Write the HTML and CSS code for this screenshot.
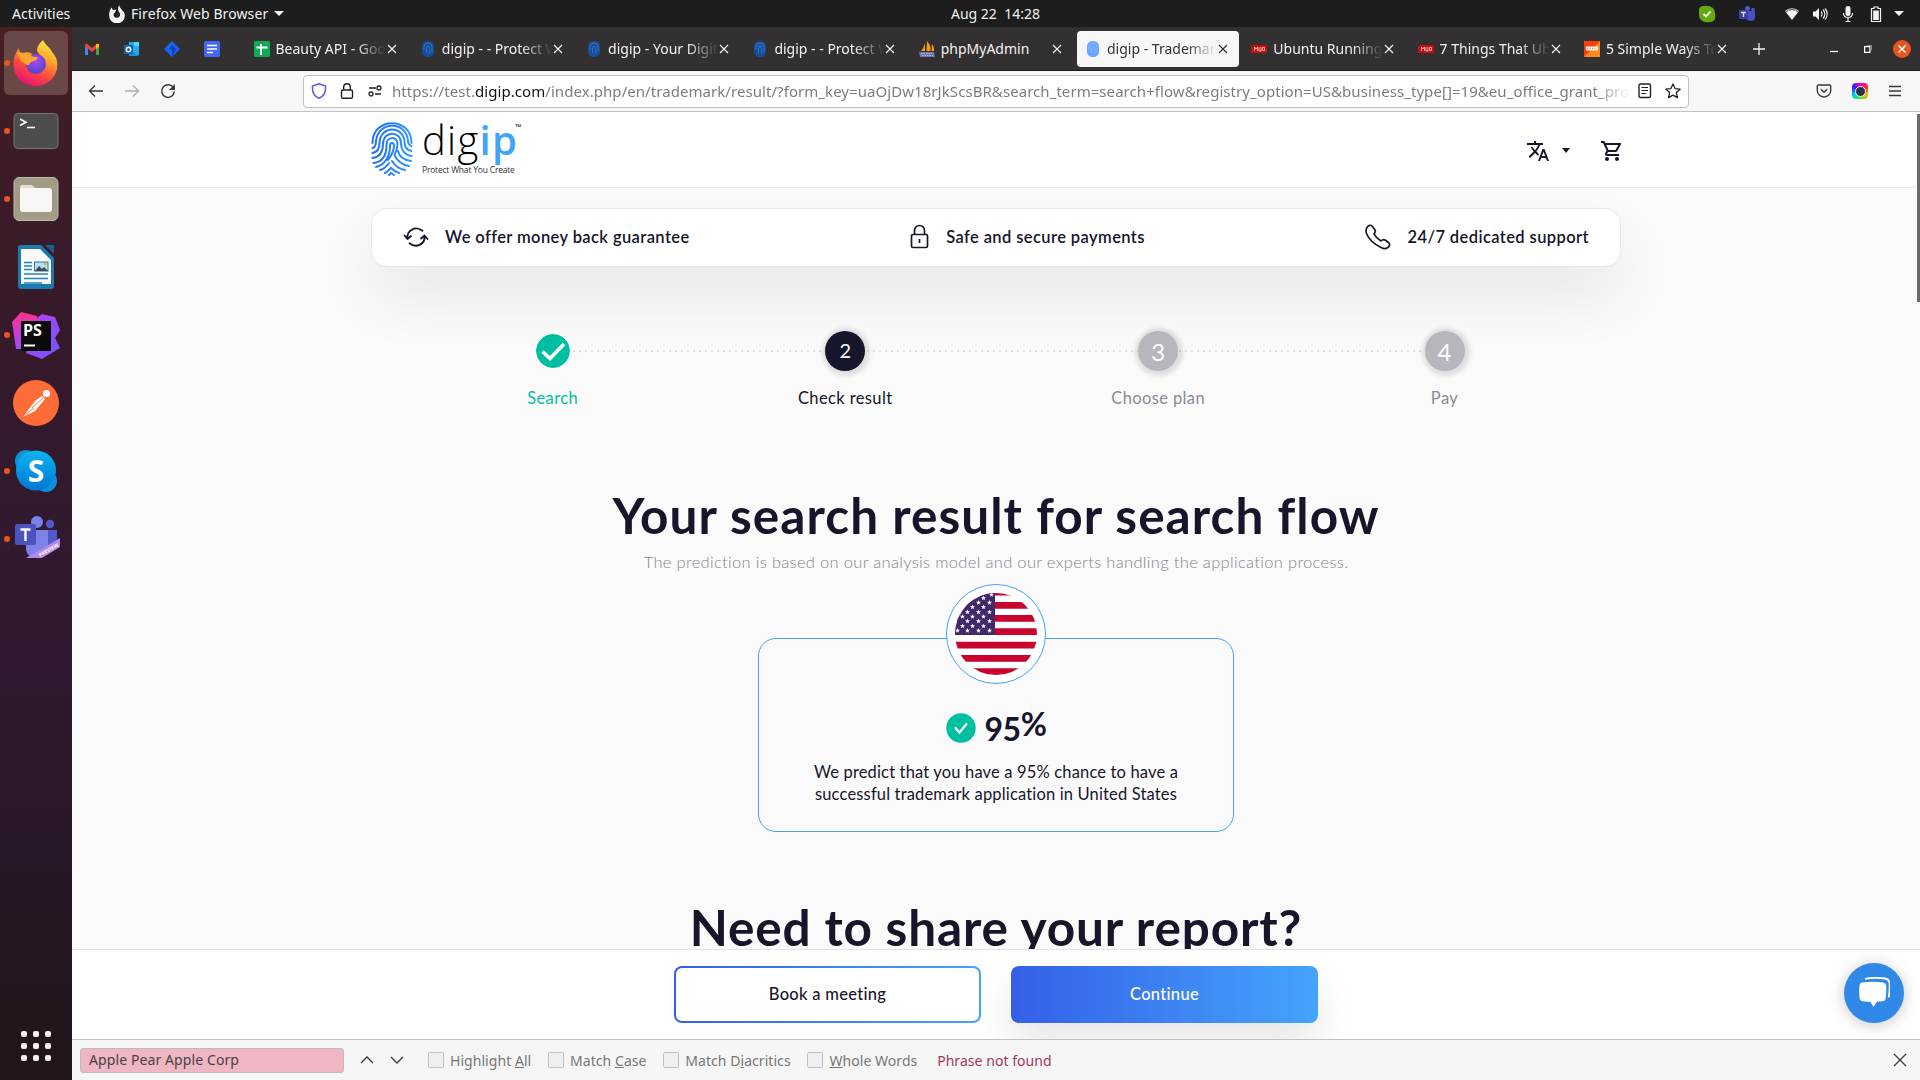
FILE: index.html
```html
<!DOCTYPE html>
<html lang="en">
<head>
<meta charset="utf-8">
<title>digip - Trademark result</title>
<link rel="stylesheet" href="styles.css">
</head>
<body>
<svg class="defs" width="0" height="0" aria-hidden="true">
  <defs>
    <linearGradient id="print-g" gradientUnits="userSpaceOnUse" x1="0" y1="0" x2="42" y2="0"><stop offset="0" stop-color="#1f6df0"/><stop offset="1" stop-color="#3399fa"/></linearGradient>
    <linearGradient id="ff-body" x1=".8" y1="0" x2=".3" y2="1"><stop offset="0" stop-color="#fff044"/><stop offset=".35" stop-color="#ffa42c"/><stop offset=".65" stop-color="#ff4b3a"/><stop offset="1" stop-color="#e3107a"/></linearGradient>
    <radialGradient id="ff-core" cx=".5" cy=".35" r=".7"><stop offset="0" stop-color="#a849f0"/><stop offset="1" stop-color="#4a45c9"/></radialGradient>
    <linearGradient id="ps-a" x1="0" y1="0" x2="0" y2="1"><stop offset="0" stop-color="#ff318c"/><stop offset="1" stop-color="#9a4bff"/></linearGradient>
    <linearGradient id="ps-b" x1="0" y1="0" x2="1" y2="1"><stop offset="0" stop-color="#c63cf2"/><stop offset="1" stop-color="#6b57ff"/></linearGradient>
    <linearGradient id="sk" x1="0" y1="0" x2="0" y2="1"><stop offset="0" stop-color="#0bb5ef"/><stop offset="1" stop-color="#0077d7"/></linearGradient>
    <symbol id="x" viewBox="0 0 12 12"><path d="M2 2l8 8M10 2l-8 8" fill="none" stroke="currentColor" stroke-width="1.2"/></symbol>
    <symbol id="fp" viewBox="0 0 16 16"><rect x="2" y="0" width="12" height="16" rx="5.5" fill="currentColor"/><path d="M4 9V6a4 4 0 0 1 8 0v5M6.500 12V7a1.600 1.600 0 0 1 3.200 0v6" fill="none" stroke="#fff" stroke-opacity=".2" stroke-width=".9"/></symbol>
    <symbol id="muo" viewBox="0 0 16 16"><path d="M2 4h14v7l-1 1H0V6z" fill="#c90d0d"/><path d="M3.500 10V6l1.500 2 1.500-2v4M8 6v4h2V6M11.500 6.500h2v3h-2z" fill="none" stroke="#fff" stroke-opacity=".8" stroke-width=".8"/></symbol>
    <symbol id="star" viewBox="0 0 10 10"><path d="M5 0l1.300 3.400L10 3.600 7.100 5.900 8.100 9.500 5 7.400 1.900 9.500 2.900 5.900 0 3.600l3.700-.2z" fill="#fff"/></symbol>
  </defs>
</svg>

<header class="topbar">
  <span class="activities">Activities</span>
  <svg class="app-mark" width="16" height="18" viewBox="0 0 16 18"><path d="M10.500 0c-.4 2 .8 2.600 1.900 4.200C15 7 16 8 15.800 11a7.700 7.300 0 0 1-15.600 0C0 7 1 4.500 2.500 2.500L4 5l3.500-.6L6 7.500c-1.800 1-2 4 .5 5 2.500.8 5-.8 4.500-3.500C10.700 7 9 6.500 9 4 9 2.500 9.500 1 10.500 0z" fill="#f2f2f2"/></svg>
  <span class="app-name">Firefox Web Browser</span>
  <i class="caret"></i>
  <span class="clock">Aug 22&nbsp; 14:28</span>
  <div class="tray">
    <svg width="18" height="18" viewBox="0 0 18 18"><path d="M1 6C1 2 3 1 6 1c6-1 11 2 11 7 1 5 0 9-5 9C5 18 1 15 1 9z" fill="#65a80f"/><path d="M5.500 9l2.500 2.500 4.500-5" fill="none" stroke="#fff" stroke-width="1.800"/></svg>
    <svg width="18" height="18" viewBox="0 0 18 18"><circle cx="9.500" cy="3.500" r="2.500" fill="#5059c9"/><circle cx="15" cy="4.500" r="1.800" fill="#5059c9"/><path d="M8 6h9v6c0 3-2 4-4 4s-5-1-5-4z" fill="#4a50bd"/><rect x="1" y="5" width="9" height="9" fill="#3940a5"/><path d="M3 7.500h5M5.500 7.500V12" stroke="#ddd" stroke-width="1.300"/></svg>
    <svg width="16" height="16" viewBox="0 0 16 16"><path d="M1 5a10 10 0 0 1 14 0L8 14z" fill="#f2f2f2"/><path d="M1.500 6.300a9 9 0 0 1 13 0" fill="none" stroke="#1d1d1d" stroke-width=".8"/></svg>
    <svg width="16" height="16" viewBox="0 0 16 16"><path d="M1 5.500h2.500L7 2v12l-3.500-3.500H1z" fill="#f2f2f2"/><path d="M9 5.500a3.500 3.500 0 0 1 0 5M11 3.500a6.500 6.500 0 0 1 0 9M13 2.500a8 8 0 0 1 0 11" fill="none" stroke="#f2f2f2" stroke-width="1.100"/></svg>
    <svg width="12" height="16" viewBox="0 0 12 16"><rect x="3.500" y="0" width="5" height="10" rx="2.500" fill="#f2f2f2"/><path d="M1.500 7c0 6 9 6 9 0M6 12v3.500M3.500 15.500h5" fill="none" stroke="#f2f2f2" stroke-width="1.200"/></svg>
    <svg width="12" height="16" viewBox="0 0 12 16"><path d="M4 1h4v1.500h2.500v13h-9v-13H4z" fill="none" stroke="#f2f2f2" stroke-width="1.200"/><rect x="3.200" y="4.500" width="5.600" height="9.500" fill="#f2f2f2"/></svg>
    <i class="caret"></i>
  </div>
</header>

<div class="desktop">
  <nav class="dock">
    <div class="app running focused"><svg width="48" height="48" viewBox="0 0 48 48"><path d="M31 1c2 5 7 7 9 12 5 5 6 11 5 17-2 9-10 17-21 17C11 47 2 38 1.500 26 1 19 4 13 7 9c0 3 1 5 3 6 3-2 6-2 9-1 1 2 2 3 5 3l5 1-4-6c0-5 3-8 6-11z" fill="url(#ff-body)"/><circle cx="24" cy="25" r="10" fill="url(#ff-core)"/><path d="M5 14c5-1 10 0 13 2 2 2 5 2 8 2-1 4-6 4-8 6-1 5-5 0-9-2z" fill="#ffa52d"/></svg></div>
    <div class="app running"><svg width="48" height="48" viewBox="0 0 48 48"><rect x="2" y="6.500" width="44" height="35" rx="4" fill="#4d4d4d" stroke="#777" stroke-width="1"/><path d="M8 12l6 3.200-6 3.200" fill="none" stroke="#fff" stroke-width="1.700"/><path d="M15 20.500h8" stroke="#fff" stroke-width="1.600"/></svg></div>
    <div class="app running"><svg width="48" height="48" viewBox="0 0 48 48"><rect x="2" y="2.500" width="44" height="43" rx="5" fill="#a29b86" stroke="#bdb8a8"/><path d="M8 12q0-2 2-2h10l4 4v4H8z" fill="#e3dfd3"/><rect x="8" y="13" width="32" height="24" rx="3" fill="#f8f7f5"/></svg></div>
    <div class="app"><svg width="48" height="48" viewBox="0 0 48 48"><path d="M9 2h20l13 13v28q0 3-3 3H9q-3 0-3-3V5q0-3 3-3z" fill="#1d7ab0"/><path d="M33 2h9v9z" fill="#17618c"/><path d="M9 6h19l11 11v24H9z" fill="#fafafa"/><g stroke="#2184b8" stroke-width="1.600"><path d="M12 19.500h8M12 23h8M12 26.500h8M12 31h24M12 35.500h24M12 40h18"/></g><rect x="22.500" y="19" width="13.500" height="9" fill="#b6ddf2" stroke="#1d7ab0"/><path d="M23 28l4-5 3 3 2-2 4 4z" fill="#444"/><circle cx="33.500" cy="21" r="1.300" fill="#f5a800"/></svg></div>
    <div class="app running"><svg width="48" height="48" viewBox="0 0 48 48"><path d="M0 11L9 1l16 4v20L13 38H4z" fill="url(#ps-a)"/><path d="M25 7l5-4 13 3 5 13-5 8 5 10-18 11-16-6z" fill="url(#ps-b)"/><rect x="9" y="10" width="30" height="30" fill="#0b0b0b"/><text x="11" y="25" class="ps">PS</text><path d="M12 34.500h11" stroke="#fff" stroke-width="2"/></svg></div>
    <div class="app"><svg width="48" height="48" viewBox="0 0 48 48"><circle cx="24" cy="24" r="23" fill="#ff6c37"/><circle cx="34.500" cy="14.500" r="3.600" fill="#fff"/><path d="M30 17l3 3-10 12-6 3-6 3 6-8 6-8z" fill="#fff"/><path d="M20 29l11-10M13 36l9-7" stroke="#ff6c37" stroke-width=".9"/></svg></div>
    <div class="app running"><svg width="48" height="48" viewBox="0 0 48 48"><circle cx="14" cy="14" r="11" fill="#0a93d8"/><circle cx="34" cy="34" r="11" fill="#0a8fdc"/><circle cx="24" cy="23.500" r="20" fill="url(#sk)"/><text x="24" y="35" text-anchor="middle" class="skype">S</text></svg></div>
    <div class="app running"><svg width="48" height="48" viewBox="0 0 48 48"><circle cx="25" cy="7" r="6" fill="#7b83eb"/><circle cx="38" cy="9" r="4.200" fill="#5059c9"/><path d="M32 15h13v12c0 7-5 10-11 9z" fill="#5059c9"/><path d="M14 15h22v17c0 8-7 12-12 11-6 0-10-4-10-10z" fill="#7b83eb"/><rect x="3" y="9" width="21" height="21" rx="2" fill="#4b53bc"/><path d="M8.500 14.500h10M13.500 14.500V26" stroke="#fff" stroke-width="2.400"/><path d="M14 43L48 23v9L30 43z" fill="#b289e6"/><text x="28" y="42" transform="rotate(-30 28 42)" class="preview">PREVIEW</text></svg></div>
    <div class="apps-grid"><i></i><i></i><i></i><i></i><i></i><i></i><i></i><i></i><i></i></div>
  </nav>

  <section class="window">
    <div class="tabs">
      <div class="pin"><svg width="16" height="16" viewBox="0 0 16 16"><path d="M2.500 14V4" stroke="#4285f4" stroke-width="3"/><path d="M13.500 14V4" stroke="#34a853" stroke-width="3"/><path d="M1.500 3.500L8 9l6.500-5.500" fill="none" stroke="#ea4335" stroke-width="3"/><path d="M12 3h3v3l-3 2z" fill="#fbbc04"/></svg></div>
      <div class="pin"><svg width="16" height="16" viewBox="0 0 16 16"><path d="M5 1h10v13H5z" fill="#28a8ea"/><path d="M10 1h5v4h-5z" fill="#50d9ff"/><path d="M5 9l10 6H5z" fill="#1490df"/><rect y="4" width="9" height="9" fill="#0f65b5"/><circle cx="4.500" cy="8.500" r="2.200" fill="none" stroke="#fff" stroke-width="1.400"/></svg></div>
      <div class="pin"><svg width="16" height="16" viewBox="0 0 16 16"><path d="M8 0l8 8-8 8-8-8z" fill="#1d63f2"/><path d="M8 4l4 4-4 8V9L5 8z" fill="#0f3fc4"/></svg></div>
      <div class="pin"><svg width="16" height="16" viewBox="0 0 16 16"><rect width="16" height="16" rx="1.500" fill="#4269f0"/><path d="M3 4.500h10M3 8h10M3 11.500h6" stroke="#fff" stroke-width="1.700"/></svg></div>
      <div class="tab first"><svg width="16" height="16" viewBox="0 0 16 16"><rect width="16" height="16" rx="1.500" fill="#0fa958"/><path d="M7 3v11M2.500 6.500h11" stroke="#fff" stroke-width="2"/></svg><span class="label">Beauty API - Goo</span><svg class="close"><use href="#x"/></svg></div>
      <div class="tab"><svg class="fav navy"><use href="#fp"/></svg><span class="label">digip - - Protect W</span><svg class="close"><use href="#x"/></svg></div>
      <div class="tab"><svg class="fav navy"><use href="#fp"/></svg><span class="label">digip - Your Digit</span><svg class="close"><use href="#x"/></svg></div>
      <div class="tab"><svg class="fav navy"><use href="#fp"/></svg><span class="label">digip - - Protect W</span><svg class="close"><use href="#x"/></svg></div>
      <div class="tab"><svg width="16" height="16" viewBox="0 0 16 16"><path d="M6 2v8H2c2-2 3-5 4-8zM8 0c3 3 4 7 3.500 10H7.500zM13 3c2 2 2 5 2 7h-2.500z" fill="#f89c0e"/><path d="M0 11h15l1 5H1z" fill="#6c78af"/><path d="M2 12.500h11M3 14.500h11" stroke="#ccd" stroke-width=".8" stroke-dasharray="1.500 1"/></svg><span class="label whole">phpMyAdmin</span><svg class="close"><use href="#x"/></svg></div>
      <div class="tab active"><svg class="fav sky"><use href="#fp"/></svg><span class="label">digip - Trademark</span><svg class="close"><use href="#x"/></svg></div>
      <div class="tab"><svg class="fav"><use href="#muo"/></svg><span class="label">Ubuntu Running</span><svg class="close"><use href="#x"/></svg></div>
      <div class="tab"><svg class="fav"><use href="#muo"/></svg><span class="label">7 Things That Ub</span><svg class="close"><use href="#x"/></svg></div>
      <div class="tab"><svg width="16" height="16" viewBox="0 0 16 16"><rect width="16" height="16" fill="#fb3d0c"/><path d="M0 16L16 0v16z" fill="#ff8a16"/><path d="M2 5.500h12v4H2z" fill="#fff"/><path d="M3 7.500h10" stroke="#fb6a30" stroke-width="1.300" stroke-dasharray="1 1.500"/></svg><span class="label">5 Simple Ways To</span><svg class="close"><use href="#x"/></svg></div>
      <svg class="plus" width="12" height="12" viewBox="0 0 12 12"><path d="M6 0v12M0 6h12" stroke="#f5f5f5" stroke-width="1.300"/></svg>
      <div class="wm">
        <svg width="8" height="8" viewBox="0 0 8 8"><path d="M0 6.500h8" stroke="#fff" stroke-width="1.200"/></svg>
        <svg width="8" height="8" viewBox="0 0 8 8"><path d="M.6 1.600h5.300v5.700H.6z" fill="none" stroke="#fff" stroke-width="1.200"/><path d="M2.500.4H7.600v5" fill="none" stroke="#bbb" stroke-width=".7"/></svg>
        <svg width="18" height="18" viewBox="0 0 18 18"><circle cx="9" cy="9" r="9" fill="#e95420"/><path d="M5.500 5.500l7 7M12.500 5.500l-7 7" stroke="#fff" stroke-width="1.500"/></svg>
      </div>
    </div>

    <div class="toolbar">
      <div class="nav-buttons">
        <svg width="16" height="16" viewBox="0 0 16 16"><path d="M15 8H1.500M7 2.500L1.500 8 7 13.500" fill="none" stroke="#3a3a3a" stroke-width="1.400"/></svg>
        <svg width="16" height="16" viewBox="0 0 16 16"><path d="M1 8h13.500M9 2.500L14.500 8 9 13.500" fill="none" stroke="#b0b0b0" stroke-width="1.400"/></svg>
        <svg width="16" height="16" viewBox="0 0 16 16"><path d="M13.500 5A6.300 6.300 0 1 0 14.300 8.500" fill="none" stroke="#3a3a3a" stroke-width="1.500"/><path d="M15 1v6H9z" fill="#3a3a3a"/></svg>
      </div>
      <div class="urlbar">
        <svg width="16" height="16" viewBox="0 0 16 16"><path d="M8 .8L14.500 3C15 9 12.500 13.500 8 15.300 3.500 13.500 1 9 1.500 3z" fill="none" stroke="#6354d8" stroke-width="1.500"/></svg>
        <svg width="16" height="16" viewBox="0 0 16 16"><rect x="2.500" y="7" width="11" height="8.300" rx="1.200" fill="none" stroke="#222" stroke-width="1.400"/><path d="M4.700 7V4a3.300 3.300 0 0 1 6.600 0v3" fill="none" stroke="#222" stroke-width="1.400"/></svg>
        <svg width="16" height="16" viewBox="0 0 16 16"><path d="M2 5h7M8 11h6" stroke="#222" stroke-width="1.400"/><circle cx="12" cy="5" r="2" fill="none" stroke="#222" stroke-width="1.300"/><circle cx="4" cy="11" r="2" fill="none" stroke="#222" stroke-width="1.300"/></svg>
        <span class="url">https://test.<b>digip.com</b>/index.php/en/trademark/result/?form_key=uaOjDw18rJkScsBR&amp;search_term=search+flow&amp;registry_option=US&amp;business_type[]=19&amp;eu_office_grant_pro</span>
        <svg width="14" height="16" viewBox="0 0 14 16"><rect x="1" y="1" width="11.500" height="13.500" rx="1.500" fill="none" stroke="#222" stroke-width="1.400"/><path d="M3.500 4.500H10M3.500 7.500H10M3.500 10.500H8" stroke="#222" stroke-width="1.100"/></svg>
        <svg width="16" height="16" viewBox="0 0 16 16"><path d="M8 1l2.100 4.600 5 .6-3.700 3.400 1 5L8 12.100l-4.400 2.500 1-5L.9 6.200l5-.6z" fill="none" stroke="#222" stroke-width="1.300" stroke-linejoin="round"/></svg>
      </div>
      <div class="extras">
        <svg width="16" height="16" viewBox="0 0 16 16"><path d="M2.300 2h11.400q1 0 1 1v4.500a6.700 6.500 0 0 1-13.400 0V3q0-1 1-1z" fill="none" stroke="#3a3a3a" stroke-width="1.400"/><path d="M4.800 6.200L8 9.200l3.200-3" fill="none" stroke="#3a3a3a" stroke-width="1.500"/></svg>
        <span class="spectrum"><i></i></span>
        <svg width="14" height="12" viewBox="0 0 14 12"><path d="M1 1.500h12M1 6h12M1 10.500h12" stroke="#3a3a3a" stroke-width="1.300"/></svg>
      </div>
    </div>

    <main class="page">
      <header class="site-header">
        <div class="logo">
          <svg width="42" height="54" viewBox="0 0 42 54" fill="none" stroke="url(#print-g)" stroke-width="2" stroke-linecap="round">
            <path d="M1.500 21C1.500-5.500 40.500-5.500 40.500 21"/>
            <path d="M1.500 26c4-1 3-4 3.500-7C7-1.500 36-1 37 19c0 3 1 4 3.500 5"/>
            <path d="M1.500 31c6-1 7-5 7-10C9 3 33 3.500 33.500 20c0 5 2 8 7 9"/>
            <path d="M1.500 36c8-1 10.500-6 10.500-14C12 8.500 30 8.500 30 21c0 7 4 12 10.500 13"/>
            <path d="M2.500 41c9-1 13-8 13-18 0-9 11-9 11-1 0 3-1 7-3 11"/>
            <path d="M5 45c9-2 14-11 14-21 0-4 4-4 4 0 0 4-3 10-6 14"/>
            <path d="M27 29c1 6 7 9 13 10M24 34c3 6 9 9 14 10M21 39c3 5 8 8 13 9M9 48c4-1 7-4 9-7M14 51c2-1 4-3 6-5 3 3 5 4 8 5M18 53l2-2 3 2"/>
          </svg>
          <div class="brand">
            <div class="word"><span class="thin">dig</span><span class="bold">ip</span><sup>™</sup></div>
            <div class="tagline">Protect What You Create</div>
          </div>
        </div>
        <div class="site-actions">
          <svg width="24" height="24" viewBox="0 0 24 24" fill="#16152a"><path d="M12.870 15.070l-2.540-2.510.03-.03A17.520 17.520 0 0 0 14.070 6H17V4h-7V2H8v2H1v2h11.170C11.500 7.920 10.440 9.750 9 11.350 8.070 10.320 7.300 9.190 6.690 8h-2c.73 1.630 1.730 3.170 2.980 4.560l-5.090 5.020L4 19l5-5 3.110 3.110.76-2.040zM18.500 10h-2L12 22h2l1.120-3h4.750L21 22h2l-4.500-12zm-2.620 7l1.620-4.330L19.120 17h-3.240z"/></svg>
          <i class="caret dark"></i>
          <svg width="24" height="24" viewBox="0 0 24 24" fill="#16152a"><path d="M15.550 13c.75 0 1.410-.41 1.750-1.030l3.580-6.490A.996.996 0 0 0 20.010 4H5.210l-.94-2H1v2h2l3.600 7.590-1.350 2.440C4.520 15.370 5.480 17 7 17h12v-2H7l1.100-2h7.450zM6.160 6h12.150l-2.760 5H8.530L6.160 6zM7 18c-1.100 0-1.990.9-1.990 2S5.900 22 7 22s2-.9 2-2-.9-2-2-2zm10 0c-1.100 0-1.990.9-1.990 2s.89 2 1.990 2 2-.9 2-2-.9-2-2-2z"/></svg>
        </div>
      </header>

      <div class="content">
        <div class="promises">
          <div class="promise"><svg width="26" height="26" viewBox="0 0 26 26" fill="none" stroke="#16152a" stroke-width="1.800" stroke-linecap="round" stroke-linejoin="round"><path d="M4.500 14.500C3.500 7 12 1 19.500 6.800M21.500 12c1 7.500-8 13-15 7.200M1.500 11.500l3 3.500 3.500-3M18 14.500l3.500-3 3 3.500"/></svg><span>We offer money back guarantee</span></div>
          <div class="promise"><svg width="20" height="26" viewBox="0 0 20 26" fill="none" stroke="#16152a" stroke-width="1.700"><rect x="1.500" y="10.500" width="16" height="13" rx="1.500"/><path d="M4.500 10.500V6.500a5 5 0 0 1 10 0v4M9.500 15v4"/></svg><span>Safe and secure payments</span></div>
          <div class="promise"><svg width="26" height="26" viewBox="0 0 26 26" fill="none" stroke="#16152a" stroke-width="1.700" stroke-linejoin="round"><path d="M2 3.500C3.500 1 6 .5 7.500 2.500L10 6c1 1.600.2 2.600-1 3.800 1.500 3 3.800 5.300 7 7.200 1.300-1.200 2.500-2 4-1l3.500 2.500c2 1.500 1 4-1 5.300-1.500 1-4 1-6 0C8.500 20 3.500 14.500 1.500 9.500.8 7.500 1 5 2 3.500z"/></svg><span>24/7 dedicated support</span></div>
        </div>

        <ol class="steps">
          <li class="done"><svg class="dot" width="34" height="34" viewBox="0 0 34 34"><circle cx="17" cy="17" r="17" fill="#00bfa0"/><path d="M6.500 17.500l7.500 7L28 10" fill="none" stroke="#fff" stroke-width="3.600"/></svg><span>Search</span></li>
          <li class="current"><b class="dot">2</b><span>Check result</span></li>
          <li class="plan"><b class="dot">3</b><span>Choose plan</span></li>
          <li class="pay"><b class="dot">4</b><span>Pay</span></li>
        </ol>

        <h1>Your search result for search flow</h1>
        <p class="sub">The prediction is based on our analysis model and our experts handling the application process.</p>

        <div class="result">
          <div class="flag">
            <svg width="82" height="82" viewBox="0 0 82 82"><clipPath id="round"><circle cx="41" cy="41" r="41"/></clipPath><g clip-path="url(#round)"><rect width="82" height="82" fill="#fff"/><path d="M0 0h82v2.500H0zM0 9h82v6.700H0zM0 22h82v6.700H0zM0 35.200h82v6.700H0zM0 48.700h82v6.700H0zM0 62h82v6.700H0zM0 75.300h82V82H0z" fill="#c8042f"/><rect width="40" height="42" fill="#41296c"/>
            <g><use href="#star" x="26" y="2.500" width="5" height="5"/><use href="#star" x="34" y="-1" width="5" height="5"/><use href="#star" x="32" y="7" width="5" height="5"/><use href="#star" x="21" y="7" width="5" height="5"/><use href="#star" x="15" y="11.500" width="5" height="5"/><use href="#star" x="26" y="11.500" width="5" height="5"/><use href="#star" x="10" y="16.500" width="5" height="5"/><use href="#star" x="21" y="16.500" width="5" height="5"/><use href="#star" x="32" y="16.500" width="5" height="5"/><use href="#star" x="5" y="21" width="5" height="5"/><use href="#star" x="15" y="21" width="5" height="5"/><use href="#star" x="26" y="21" width="5" height="5"/><use href="#star" x="10" y="25.500" width="5" height="5"/><use href="#star" x="21" y="25.500" width="5" height="5"/><use href="#star" x="32" y="25.500" width="5" height="5"/><use href="#star" x="5" y="30.500" width="5" height="5"/><use href="#star" x="15" y="30.500" width="5" height="5"/><use href="#star" x="26" y="30.500" width="5" height="5"/><use href="#star" x="0" y="35" width="5" height="5"/><use href="#star" x="10" y="35" width="5" height="5"/><use href="#star" x="21" y="35" width="5" height="5"/><use href="#star" x="32" y="35" width="5" height="5"/></g></g></svg>
          </div>
          <div class="score"><svg width="30" height="30" viewBox="0 0 30 30"><circle cx="15" cy="15" r="14.700" fill="#00bfa0"/><path d="M9.500 15l4 4.500 7-8.500" fill="none" stroke="#fff" stroke-width="2.200" stroke-linecap="round"/></svg><span class="pct"><span class="old">95</span>%</span></div>
          <p class="verdict">We predict that you have a 95% chance to have a<br>successful trademark application in United States</p>
        </div>

        <h2>Need to share your report?</h2>
      </div>

      <div class="cta-bar">
        <button class="btn outline">Book a meeting</button>
        <button class="btn solid">Continue</button>
        <div class="chat"><svg width="32" height="32" viewBox="0 0 32 32"><path d="M4 5.500q11-1.500 21 0 3 .5 3.200 4 .3 6-.3 11-.3 3.500-3.500 3.800-2.500.3-5.500.4L15.500 30 12.300 24.700q-3.500 0-7.500-.5Q2 24 1.500 20.500.8 15 1.400 9.500 1.500 6 4 5.500z" fill="#fff"/><path d="M7 1.800Q17 0 27 1.500q4 .6 4.500 4.500.6 6.500-.8 14.500" fill="none" stroke="#fff" stroke-width="1.800"/></svg></div>
      </div>
      <i class="scroll-thumb"></i>
    </main>

    <div class="findbar">
      <div class="find-input">Apple Pear Apple Corp</div>
      <svg class="up" width="14" height="14" viewBox="0 0 14 14"><path d="M1 10l6-6 6 6" fill="none" stroke="#3a3a3a" stroke-width="1.300"/></svg>
      <svg class="down" width="14" height="14" viewBox="0 0 14 14"><path d="M1 4l6 6 6-6" fill="none" stroke="#3a3a3a" stroke-width="1.300"/></svg>
      <label class="opt"><i class="box"></i><span>Highlight <u>A</u>ll</span></label>
      <label class="opt"><i class="box"></i><span>Match <u>C</u>ase</span></label>
      <label class="opt"><i class="box"></i><span>Match D<u>i</u>acritics</span></label>
      <label class="opt"><i class="box"></i><span><u>W</u>hole Words</span></label>
      <span class="missing">Phrase not found</span>
      <svg class="find-close" width="14" height="14" viewBox="0 0 14 14"><path d="M1 1l12 12M13 1L1 13" stroke="#3a3a3a" stroke-width="1.300"/></svg>
    </div>
  </section>
</div>
</body>
</html>
```
FILE: styles.css
```css
* { box-sizing: border-box; }
body {
  margin: 0;
  width: 1920px;
  height: 1080px;
  overflow: hidden;
  display: flex;
  flex-direction: column;
  font-family: "Noto Sans", "Open Sans", sans-serif;
  font-size: 14px;
  color: #16152a;
}
svg, i { display: block; flex: none; }
.defs { position: absolute; }
span { white-space: nowrap; }

/* Desktop shell */
.topbar {
  height: 27px;
  flex: none;
  background: #1d1d1d;
  color: #f2f2f2;
  display: flex;
  align-items: center;
  padding: 0 16px 0 12px;
}
.activities { width: 97px; }
.app-name { margin-left: 6px; width: 143px; letter-spacing: .1px; }
.clock { margin-left: 667px; }
.caret { width: 0; height: 0; border: 5px solid transparent; border-top-color: #f2f2f2; border-bottom: 0; }
.tray { margin-left: auto; display: flex; align-items: center; }
.tray > :nth-child(1) { margin-right: 22px; }
.tray > :nth-child(2) { margin-right: 28px; }
.tray > :nth-child(3) { margin-right: 12px; }
.tray > :nth-child(4) { margin-right: 14px; }
.tray > :nth-child(5) { margin-right: 16px; }
.tray > :nth-child(6) { margin-right: 12px; }
.desktop { display: flex; flex: 1; min-height: 0; }
.dock {
  width: 72px;
  flex: none;
  padding: 4px 4px 0;
  display: flex;
  flex-direction: column;
  gap: 4px;
  background: linear-gradient(#48201f 0, #3f1d27 90px, #34192b 35%, #2f1a31 60%, #24161f 92%, #22151b);
}
.app { position: relative; width: 64px; height: 64px; border-radius: 6px; display: grid; place-items: center; }
.focused { background: #6a4848; }
.running::before { content: ""; position: absolute; left: 0; top: 29px; width: 6px; height: 6px; border-radius: 50%; background: #e95420; }
.ps { font: 700 16px "Open Sans", sans-serif; fill: #fff; }
.skype { font: 700 30px "Open Sans", sans-serif; fill: #fff; }
.preview { font: 700 5px "Open Sans", sans-serif; fill: #fff; }
.apps-grid { margin: auto 17px 19px; display: grid; grid-template-columns: repeat(3, 6px); gap: 6px; }
.apps-grid i { width: 6px; height: 6px; border-radius: 2px; background: #f2f1ee; }

/* Browser chrome */
.window { flex: 1; display: flex; flex-direction: column; min-width: 0; }
.tabs { height: 44px; flex: none; background: #323031; border-bottom: 1px solid #1c1c1c; display: flex; align-items: center; color: #f2f2f2; }
.pin { width: 40px; display: grid; place-items: center; }
.tab { width: 162px; height: 36px; margin-right: 4.3px; padding-left: 8px; border-radius: 4px; display: flex; align-items: center; }
.first { margin-left: 13.5px; }
.tab.active { background: #f7f7f7; color: #2e3436; }
.label { width: 110px; margin-left: 6px; overflow: hidden; -webkit-mask-image: linear-gradient(90deg, #000 72%, transparent); mask-image: linear-gradient(90deg, #000 72%, transparent); }
.label.whole { -webkit-mask-image: none; mask-image: none; }
.fav { width: 16px; height: 16px; }
.close { width: 12px; height: 12px; }
.navy { color: #134f9f; }
.sky { color: #6ba4ff; }
.plus { margin-left: 11px; }
.wm { margin-left: auto; padding-right: 9px; display: flex; align-items: center; gap: 26px; }
.wm svg:last-child { margin-left: -5px; }
.toolbar { height: 41px; flex: none; background: #f7f7f7; border-bottom: 1px solid #c3c3c3; display: flex; align-items: center; }
.nav-buttons { display: flex; gap: 20px; width: 231px; padding-left: 16px; }
.urlbar { width: 1386px; height: 33px; border: 1px solid #bfbfbf; border-radius: 4px; background: #fff; display: flex; align-items: center; padding: 0 7px; }
.urlbar > svg:nth-child(2) { margin-left: 12px; }
.urlbar > svg:nth-child(3) { margin-left: 12px; }
.url { width: 1239px; margin: 0 7px 0 9px; overflow: hidden; font-size: 15px; letter-spacing: .06px; color: #7c7c7c; -webkit-mask-image: linear-gradient(90deg, #000 97%, transparent); mask-image: linear-gradient(90deg, #000 97%, transparent); }
.url b { font-weight: 400; color: #111; }
.urlbar > svg:last-child { margin-left: 13px; }
.extras { margin-left: auto; padding-right: 18px; display: flex; align-items: center; gap: 20px; }
.spectrum { width: 16px; height: 16px; border-radius: 4px; display: grid; place-items: center; background: conic-gradient(#f0c, #f22, #fb0, #3e3, #0ce, #22f, #f0c); }
.spectrum i { width: 11px; height: 11px; border-radius: 50%; background: #234; border: 1.5px solid #fff; }

/* Site */
.page { flex: 1; min-height: 0; position: relative; background: #fafafa; display: flex; flex-direction: column; font-family: Lato, sans-serif; font-size: 16.5px; }
.site-header { height: 80px; flex: none; background: linear-gradient(#fff 75px, #e8e8e8 75px, #e8e8e8 76px, #fff 76px); display: flex; justify-content: space-between; padding: 10px 296px 0 299px; }
.logo { display: flex; gap: 9px; }
.brand { font-family: "Open Sans", sans-serif; }
.word { font-size: 40px; line-height: 36px; height: 40px; display: flex; color: #000; letter-spacing: 1.3px; }
.thin { font-weight: 300; }
.bold { font-weight: 600; color: #3fa4fb; }
.word sup { font-size: 8px; line-height: 8px; margin: 1px 0 0 -3px; letter-spacing: 0; }
.tagline { font-size: 8.5px; line-height: 12px; margin-top: 2px; color: #333; letter-spacing: -.2px; }
.site-actions { display: flex; align-items: center; height: 57px; }
.dark { border-top-color: #16152a; border-width: 5px 4.5px 0; margin: 0 30px 0 12px; }
.content { flex: 1; min-height: 0; overflow: hidden; display: flex; flex-direction: column; align-items: center; padding-top: 16px; }
.promises { width: 1250px; height: 59px; flex: none; border: 1px solid #e8e8e8; border-radius: 16px; background: #fff; box-shadow: 0 30px 60px rgba(0, 0, 0, .08); display: flex; justify-content: space-between; align-items: center; padding: 0 31px 1px; }
.promise { display: flex; align-items: center; gap: 16px; font-weight: 600; letter-spacing: .4px; }
.promise span { padding-bottom: 1px; }
.steps { position: relative; list-style: none; margin: 58px 0 0 -7px; padding: 0; width: 931px; display: flex; }
.steps::before { content: ""; position: absolute; left: 46px; right: 33px; top: 25px; height: 2px; background: repeating-linear-gradient(90deg, #dfdfdf 0 2px, transparent 2px 6px); }
.steps li { width: 52px; display: flex; flex-direction: column; align-items: center; position: relative; color: #8c8b94; }
.steps .current { width: 94px; margin-left: 220px; color: #16152a; }
.steps .plan { width: 94px; margin-left: 219px; }
.steps .pay { width: 27px; margin-left: 226px; }
.steps .dot { flex: none; width: 40px; height: 40px; margin: 6px 0 16px; border-radius: 50%; background: #b7b6bd; box-shadow: 1px 1px 4px 4px rgba(22, 21, 42, .12); color: #fff; font: 400 24px/41px Lato, sans-serif; text-align: center; }
.steps svg.dot { width: 34px; height: 34px; margin: 9px 0 19px; background: none; box-shadow: none; }
.steps span { line-height: 22px; letter-spacing: .38px; }
.steps .done { color: #00bfa0; }
.steps .current .dot { background: #16152a; font-size: 20px; line-height: 39px; }
h1, h2 { margin: 0; font-size: 49.5px; line-height: 58px; font-weight: 700; flex: none; letter-spacing: 1.05px; }
h1 { margin-top: 77px; }
.sub { margin: 7px 0 0; line-height: 22px; color: #85848c; font-weight: 300; letter-spacing: .32px; }
.result { position: relative; flex: none; width: 476px; height: 194px; margin-top: 65px; border: 1px solid #43a0f8; border-radius: 18px; text-align: center; }
.flag { position: absolute; left: 187px; top: -55px; width: 100px; height: 100px; border-radius: 50%; border: 1px solid #43a0f8; background: #fff; display: grid; place-items: center; }
.score { display: flex; justify-content: center; align-items: center; gap: 9px; margin-top: 69px; height: 40px; }
.pct { font-size: 32px; line-height: 40px; font-weight: 700; letter-spacing: -.5px; position: relative; top: -4px; }
.old { position: relative; top: 5px; }
.verdict { margin: 13px 0 0; line-height: 22px; letter-spacing: .16px; }
h2 { margin-top: 66px; letter-spacing: .85px; }
.cta-bar { height: 90px; flex: none; background: #fff; border-top: 1px solid #e3e3e3; display: flex; justify-content: center; align-items: center; gap: 30px; position: relative; overflow: hidden; }
.btn { width: 307px; height: 57px; padding: 0 0 2px; border: 0; border-radius: 8px; font: 500 16.5px Lato, sans-serif; letter-spacing: .3px; color: #16152a; }
.outline { border: 2px solid transparent; background: linear-gradient(#fff, #fff) padding-box, linear-gradient(90deg, #345fe8, #44a4fb) border-box; }
.solid { color: #fff; background: linear-gradient(90deg, #345fe8, #44a4fb); box-shadow: 0 20px 40px rgba(0, 0, 0, .1); }
.chat { position: absolute; right: 16px; top: 13px; width: 60px; height: 60px; border-radius: 50%; background: #3088e8; box-shadow: 0 2px 16px rgba(0, 0, 0, .22); display: grid; place-items: center; }
.scroll-thumb { position: absolute; right: 0; top: 2px; width: 3px; height: 188px; background: #6a6a6a; }

/* Find bar */
.findbar { height: 41px; flex: none; border-top: 1px solid #c0c0c0; background: #f6f6f6; display: flex; align-items: center; color: #777; padding: 0 13px 0 8px; letter-spacing: .05px; }
.find-input { width: 264px; height: 25px; border: 1px solid #c3b9bb; border-radius: 3px; background: #f0b6c4; color: #444; padding-left: 8px; line-height: 22px; margin-right: 16px; letter-spacing: .1px; }
.down { margin: 0 24px 0 16px; }
.opt { display: flex; align-items: center; gap: 6px; margin-right: 16.8px; }
.box { width: 16px; height: 16px; border: 1px solid #c0c0c0; border-radius: 2px; background: #efefef; }
.missing { color: #a4375b; margin-left: 3px; }
.find-close { margin-left: auto; }
```
